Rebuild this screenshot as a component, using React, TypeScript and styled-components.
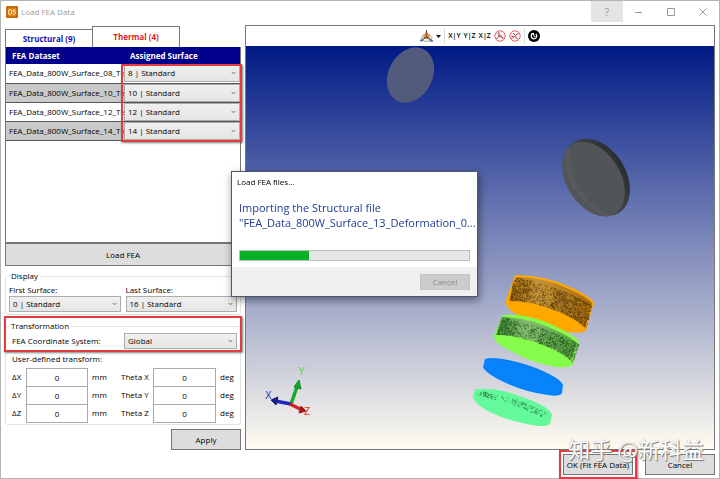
import React, { useState } from "react";
import styled, { createGlobalStyle, css } from "styled-components";

const GlobalStyle = createGlobalStyle`
  *, *::before, *::after { box-sizing: border-box; }
  body { margin: 0; background: #fff; }
  body, button, input, select {
    font-family: "Open Sans", "Noto Sans", "Noto Sans CJK SC", sans-serif;
    font-size: 8px;
    line-height: 12px;
    color: #000;
  }
`;

const Window = styled.div`
  min-height: 100vh;
  display: flex;
  flex-direction: column;
  border: 1px solid #b4b4b4;
  background: #fff;
`;

const TitleBar = styled.header`
  height: 21px;
  display: flex;
  align-items: stretch;
  justify-content: space-between;
`;

const TitleGroup = styled.div`
  display: flex;
  align-items: center;
  gap: 3px;
  padding-left: 5px;
`;

const Title = styled.h1`
  margin: 0;
  font-size: 8px;
  font-weight: 400;
  color: #999;
`;

const CaptionButtons = styled.div`
  display: flex;
`;

const CaptionButton = styled.button<{ $active?: boolean }>`
  width: 32px;
  padding: 0;
  border: 0;
  display: grid;
  place-items: center;
  color: #999;
  font-size: 10px;
  background: ${(p) => (p.$active ? "#e4e4e4" : "transparent")};
`;

const Body = styled.main`
  flex: 1;
  display: grid;
  grid-template-columns: 236px minmax(0, 1fr);
  gap: 4px;
  padding: 3px 4px 0 4px;
`;

const Sidebar = styled.section`
  display: flex;
  flex-direction: column;
`;

const Tabs = styled.div`
  display: flex;
  align-items: flex-end;
  height: 22px;
`;

const Tab = styled.button<{ $active?: boolean }>`
  width: 88px;
  height: ${(p) => (p.$active ? 21 : 18)}px;
  padding: 0;
  border: 1px solid #777;
  border-bottom: 0;
  background: #fff;
  font-weight: 700;
  color: ${(p) => (p.$active ? "#e01b24" : "#1414b4")};
  & + & { margin-left: -1px; }
`;

const TableArea = styled.div`
  position: relative;
  flex: 1;
  min-height: 190px;
  border: 1px solid #777;
  border-top: 0;
`;

const DataTable = styled.table`
  width: 100%;
  border-collapse: collapse;
  table-layout: fixed;
`;

const HeadCell = styled.th`
  height: 17px;
  padding: 0 7px 0 6px;
  background: #00008b;
  color: #fff;
  font-weight: 700;
  text-align: left;
  &:first-child { width: 118px; }
`;

const Row = styled.tr`
  border-bottom: 1px solid #555;
  &:nth-child(even) { background: #c9c9c9; }
`;

const Cell = styled.td`
  height: 19px;
  padding: 0;
`;

const FileName = styled.div`
  padding-left: 3px;
  white-space: nowrap;
`;

const SelectWrap = styled.div<{ $tall?: boolean }>`
  position: relative;
  height: ${(p) => (p.$tall ? 18 : 16)}px;
  svg {
    position: absolute;
    right: 4px;
    top: 50%;
    margin-top: -2px;
    pointer-events: none;
  }
`;

const Select = styled.select`
  appearance: none;
  width: 100%;
  height: 100%;
  padding: 0 14px 0 3px;
  border: 1px solid #acacac;
  border-radius: 0;
  background: linear-gradient(#f0f0f0, #e5e5e5);
`;

const Highlight = styled.div<{ $kind: "surfaces" | "group" | "button" }>`
  position: absolute;
  border: 2px solid #e33b40;
  box-shadow: 1px 1px 2px rgba(0, 0, 0, 0.5);
  pointer-events: none;
  ${(p) =>
    p.$kind === "surfaces" &&
    css`
      top: 17px;
      left: 115px;
      right: -2px;
      height: 78px;
    `}
  ${(p) =>
    p.$kind === "group" &&
    css`
      top: -4px;
      left: -1px;
      right: -1px;
      height: 36px;
    `}
  ${(p) =>
    p.$kind === "button" &&
    css`
      inset: -4px;
    `}
`;

const Button = styled.button<{ $width?: number; $height?: number }>`
  width: ${(p) => (p.$width ? `${p.$width}px` : "100%")};
  height: ${(p) => p.$height ?? 21}px;
  padding: 0;
  border: 1px solid #777;
  background: #ddd;
  white-space: nowrap;
  &:disabled {
    border-color: #c4c4c4;
    background: #ccc;
    color: #888;
  }
`;

const Group = styled.fieldset`
  min-width: 0;
  margin: 0;
  padding: 1px 3px 2px;
  border: 1px solid #e2e2e2;
  border-radius: 3px;
`;

const Legend = styled.legend`
  padding: 0 2px;
`;

const DisplayGroup = styled(Group)`
  margin: 4px 0 5px;
  padding-top: 2px;
`;

const TwoColumns = styled.div`
  display: grid;
  grid-template-columns: 1fr 1fr;
  gap: 5px;
`;

const Relative = styled.div`
  position: relative;
`;

const CoordinateRow = styled.div`
  display: grid;
  grid-template-columns: 112px 1fr;
  align-items: center;
  padding-left: 3px;
`;

const Caption = styled.div`
  padding: 4px 3px 3px;
`;

const TransformGrid = styled.div`
  display: grid;
  grid-template-columns: 14px 62px 1fr 32px 63px 21px;
  align-items: center;
  padding-left: 3px;
`;

const Unit = styled.span`
  padding-left: 4px;
`;

const NumberInput = styled.input`
  width: 100%;
  height: 19px;
  margin-bottom: -1px;
  padding: 0;
  border: 1px solid #aaa;
  text-align: center;
`;

const ApplyRow = styled.div`
  display: flex;
  justify-content: flex-end;
  padding-top: 4px;
`;

const Viewer = styled.section`
  display: flex;
  flex-direction: column;
  min-width: 0;
  border: 1px solid #777;
`;

const Toolbar = styled.div`
  height: 20px;
  flex: none;
  display: flex;
  align-items: center;
  justify-content: center;
  gap: 3px;
`;

const ToolButton = styled.button`
  display: flex;
  align-items: center;
  gap: 3px;
  padding: 0;
  border: 0;
  background: none;
  font-size: 7px;
  font-weight: 600;
  white-space: pre;
`;

const Separator = styled.span`
  width: 1px;
  height: 16px;
  background: #ddd;
`;

const Viewport = styled.div`
  flex: 1;
  position: relative;
  min-height: 300px;
  background: linear-gradient(#001a85, #fffcf0);
  & > svg {
    position: absolute;
    width: 100%;
    height: 100%;
  }
`;

const Footer = styled.footer`
  position: relative;
  display: flex;
  justify-content: flex-end;
  gap: 12px;
  padding: 4px 4px 3px;
`;

const Watermark = styled.div`
  position: absolute;
  right: 15px;
  bottom: 20px;
  font-family: "Noto Sans CJK SC", sans-serif;
  font-size: 22px;
  line-height: 20px;
  white-space: nowrap;
  color: #fff;
  text-shadow: 1px 1px 1px #777, 0 0 1px #999;
  pointer-events: none;
`;

const DialogLayer = styled.div`
  position: fixed;
  inset: 0;
  display: grid;
  place-items: center;
  padding: 0 11px 12px 0;
  pointer-events: none;
`;

const Dialog = styled.div`
  width: 247px;
  border: 1px solid #4a5674;
  background: #fff;
  box-shadow: 1px 3px 8px rgba(0, 0, 0, 0.45);
  pointer-events: auto;
`;

const DialogContent = styled.div`
  padding: 4px 7px 6px;
`;

const DialogTitle = styled.h2`
  margin: 0 0 12px -2px;
  font-size: 8px;
  font-weight: 400;
`;

const Message = styled.p`
  margin: 0 0 20px;
  font-size: 11px;
  line-height: 15px;
  color: #1f3c99;
`;

const MessageLine = styled.span`
  display: block;
  white-space: nowrap;
`;

const Progress = styled.progress`
  appearance: none;
  display: block;
  width: 100%;
  height: 11px;
  border: 1px solid #bcbcbc;
  background: #e6e6e6;
  &::-webkit-progress-bar { background: #e6e6e6; }
  &::-webkit-progress-value { background: #06b025; }
`;

const DialogFooter = styled.div`
  display: flex;
  justify-content: flex-end;
  padding: 7px 7px 6px;
  background: #f0f0f0;
`;

const Chevron = () => (
  <svg width="5" height="4" viewBox="0 0 6 4" aria-hidden="true">
    <path d="M.8.7 3 2.9 5.2.7" fill="none" stroke="#555" />
  </svg>
);

function Dropdown({ label, value, id, tall }: { label?: string; value: string; id?: string; tall?: boolean }) {
  return (
    <SelectWrap $tall={tall}>
      <Select id={id} aria-label={label} defaultValue={value}>
        <option>{value}</option>
      </Select>
      <Chevron />
    </SelectWrap>
  );
}

const AppIcon = () => (
  <svg width="12" height="12" viewBox="0 0 12 12" aria-hidden="true">
    <rect width="12" height="12" rx="1" fill="#ee7d0c" />
    <rect x="1" y="1" width="10" height="10" fill="none" stroke="#8a4a12" strokeWidth=".8" />
    <ellipse cx="4" cy="6" rx="1.7" ry="2.5" fill="none" stroke="#fff2d8" />
    <path d="M9.6 4Q6.8 3 7 5q2.8.5 2.5 2.300Q9 9 6.700 8" fill="none" stroke="#fff2d8" />
  </svg>
);

const OrientationIcon = () => (
  <svg width="13" height="13" viewBox="0 0 13 13" aria-hidden="true">
    <path d="M6.500 1.500 10 5.500 9 9 4 9 3 6Z" fill="#e79a50" />
    <path d="M6.500 0v7L1 10.500M6.500 7l5.500 3.500" fill="none" stroke="#5b4638" strokeWidth="1.100" />
    <path d="M3.500 4.500 1 8.500l4 3 6-1 1-3-2.500-3" fill="none" stroke="#7aa06a" strokeWidth=".8" />
    <circle cx="6.500" cy="4.500" r="1.500" fill="#d9603b" />
    <path d="M0 10.500h3M10 11h3" stroke="#4a69b8" strokeWidth="1.400" />
  </svg>
);

const CaretIcon = () => (
  <svg width="5" height="3" viewBox="0 0 5 3" aria-hidden="true">
    <path d="M0 0h5L2.500 3Z" fill="#111" />
  </svg>
);

const AxisIcon = ({ flipped }: { flipped?: boolean }) => (
  <svg width="12" height="12" viewBox="0 0 12 12" aria-hidden="true">
    <circle cx="6" cy="6" r="5.200" fill="#fff5f5" stroke="#e65f64" />
    <path
      d={flipped ? "M2.500 6.500h3l3-3M5.500 6.500 9 9M6 5 4 3" : "M5 2v4L2.500 9M5 6l4.500 2M5 6l3 0"}
      fill="none"
      stroke="#8f4a4e"
    />
    <path d={flipped ? "M2 9 10 3" : "M2.300 2.300 9.700 9.700"} stroke="#e65f64" strokeWidth=".9" />
  </svg>
);

const ResetIcon = () => (
  <svg width="12" height="12" viewBox="0 0 12 12" aria-hidden="true">
    <circle cx="6" cy="6" r="6" fill="#000" />
    <path d="M7.800 3.900A2.800 2.800 0 1 1 4 4" fill="none" stroke="#fff" strokeWidth="1.300" />
    <path d="M3 3.300 6 2.700v3Z" fill="#fff" />
    <path d="M6 4.500v2h1.500" fill="none" stroke="#fff" strokeWidth=".8" />
  </svg>
);

/* Deterministic mesh specks across the side wall of a tilted cylinder. */
function meshSpecks(x: number, y: number, width: number, slope: number, height: number, count: number, seed: number) {
  let state = seed;
  const next = () => {
    state = (state * 16807) % 2147483647;
    return state / 2147483647;
  };
  let path = "";
  for (let i = 0; i < count; i += 1) {
    const t = next();
    if (t > 0.22 && t < 0.52 && next() < 0.6) continue;
    const v = next() * height;
    const px = x + t * width - (v / height) * 6;
    const py = y + t * slope - Math.sin(t * Math.PI) * 3 + v;
    path += `M${px.toFixed(1)} ${py.toFixed(1)}l${(next() * 1.6 - 0.8).toFixed(1)} ${(next() * 1.4).toFixed(1)}`;
  }
  return path;
}

const orangeMesh = meshSpecks(515, 277, 77, 27, 25, 2100, 91);
const greenMesh = meshSpecks(502, 317, 77, 27, 18, 1500, 57);
const mintMesh = meshSpecks(482, 391, 66, 22, 4, 240, 33);

const Scene = () => (
  <svg viewBox="246 46 468 403" preserveAspectRatio="xMidYMid slice" role="img" aria-label="Lens assembly">
    <defs>
      <linearGradient id="orangeWall" x1="0" x2="1">
        <stop offset="0" stopColor="#bd7a08" />
        <stop offset=".35" stopColor="#c39339" />
        <stop offset="1" stopColor="#a96d09" />
      </linearGradient>
      <linearGradient id="greenWall" x1="0" x2="1">
        <stop offset="0" stopColor="#4a9a34" />
        <stop offset=".38" stopColor="#86bd72" />
        <stop offset="1" stopColor="#55a638" />
      </linearGradient>
      <linearGradient id="diskEdge" x1="0" x2="1">
        <stop offset="0" stopColor="#606366" />
        <stop offset=".45" stopColor="#44484a" />
        <stop offset="1" stopColor="#292e31" />
      </linearGradient>
    </defs>
    <ellipse cx="410.500" cy="75" rx="22" ry="29" transform="rotate(27 410.500 75)" fill="#535b7d" />
    <ellipse cx="596.500" cy="177.500" rx="29.500" ry="42" transform="rotate(-32 596.500 177.500)" fill="url(#diskEdge)" />
    <ellipse cx="593.500" cy="179" rx="27" ry="40.500" transform="rotate(-32 593.500 179)" fill="#525558" />
    <path d="M565 151q-2 31 21 52 15 16 32 13-20-1-36-24-12-17-12-44Z" fill="#66696b" opacity=".25" />

    <path d="M515 275q29 0 55 12 16 7 24 15l-8 28q-2 4-19 2-29-5-49-17-13-9-12-15Z" fill="#ffa800" />
    <path d="M516 277q28 0 53 12 18 8 23 14l-7 25q-18-14-39-20-19-7-37-7Z" fill="url(#orangeWall)" />
    <path d={orangeMesh} stroke="#55380a" strokeWidth=".7" fill="none" />
    <path d="M506 301q-1 8 15 16 30 15 59 15 6 0 6-3-10-11-35-20-25-9-45-8Z" fill="#ffa800" />

    <path d="M503 315q26-2 54 12 16 8 22 14l-6 23q-2 4-17 3-28-5-48-18-13-8-14-14Z" fill="#85fc4c" />
    <path d="M503 317q24 0 50 12 18 8 24 14l-6 18q-17-14-39-20-20-6-35-6Z" fill="url(#greenWall)" />
    <path d={greenMesh} stroke="#23541e" strokeWidth=".7" fill="none" />
    <path d="M494 335q-1 8 15 15 25 14 52 17 11 1 12-4-10-11-36-20-26-9-43-8Z" fill="#85fc4c" />

    <path d="M485 359q5-2 18 0 23 4 40 12 18 8 20 14l-1 8q-2 4-14 2-22-3-42-12-20-9-23-16Z" fill="#0784fb" />
    <path d="M486 360q8-2 25 2 28 7 51 22" fill="none" stroke="#086ecb" strokeDasharray="1 2" />
    <path d="M475 389q24-2 50 9 25 9 27 17l-2 9q-5 4-23 0-22-4-39-13-14-8-15-14Z" fill="#64f99a" />
    <path d={mintMesh} stroke="#278048" strokeWidth=".8" fill="none" />

    <path d="m291 404 7-20" stroke="#17a92b" strokeWidth="3.500" />
    <path d="m294 387 5-7 2 9Z" fill="#16aa2c" stroke="#16852a" />
    <path d="m291 404-16-3" stroke="#2028b4" strokeWidth="3.500" />
    <path d="m278 397-7 3 5 5Z" fill="#171d86" stroke="#171d86" />
    <path d="m290 404 10 5" stroke="#cf2222" strokeWidth="3.500" />
    <path d="m301 406 5 5-7 2Z" fill="#a91818" stroke="#a91818" />
    <g fontFamily="Liberation Sans, sans-serif" fontSize="10">
      <text x="265" y="399" fill="#3034b3">X</text>
      <text x="298" y="375" fill="#4bdc50">Y</text>
      <text x="304" y="415" fill="#d33">Z</text>
    </g>
  </svg>
);

const surfaces = [
  { file: "FEA_Data_800W_Surface_08_Te", surface: "8 | Standard" },
  { file: "FEA_Data_800W_Surface_10_Te", surface: "10 | Standard" },
  { file: "FEA_Data_800W_Surface_12_Te", surface: "12 | Standard" },
  { file: "FEA_Data_800W_Surface_14_Te", surface: "14 | Standard" },
];

export default function App() {
  const [tab, setTab] = useState("thermal");
  return (
    <>
      <GlobalStyle />
      <Window>
        <TitleBar>
          <TitleGroup>
            <AppIcon />
            <Title>Load FEA Data</Title>
          </TitleGroup>
          <CaptionButtons>
            <CaptionButton $active aria-label="Help">?</CaptionButton>
            <CaptionButton aria-label="Minimize">
              <svg width="8" height="8"><path d="M0 4.500h7" stroke="#999" /></svg>
            </CaptionButton>
            <CaptionButton aria-label="Maximize">
              <svg width="8" height="8"><path d="M.5.5h7v7h-7Z" stroke="#999" fill="none" /></svg>
            </CaptionButton>
            <CaptionButton aria-label="Close">
              <svg width="8" height="8"><path d="m.5.5 7 7m0-7-7 7" stroke="#999" /></svg>
            </CaptionButton>
          </CaptionButtons>
        </TitleBar>
        <Body>
          <Sidebar>
            <Tabs role="tablist">
              <Tab role="tab" aria-selected={tab === "structural"} $active={tab === "structural"} onClick={() => setTab("structural")}>
                Structural (9)
              </Tab>
              <Tab role="tab" aria-selected={tab === "thermal"} $active={tab === "thermal"} onClick={() => setTab("thermal")}>
                Thermal (4)
              </Tab>
            </Tabs>
            <TableArea>
              <DataTable>
                <thead>
                  <tr>
                    <HeadCell>FEA Dataset</HeadCell>
                    <HeadCell>Assigned Surface</HeadCell>
                  </tr>
                </thead>
                <tbody>
                  {surfaces.map((s) => (
                    <Row key={s.file}>
                      <Cell><FileName>{s.file}</FileName></Cell>
                      <Cell><Dropdown tall label={`Surface for ${s.file}`} value={s.surface} /></Cell>
                    </Row>
                  ))}
                </tbody>
              </DataTable>
              <Highlight $kind="surfaces" />
            </TableArea>
            <Button $height={23}>Load FEA</Button>
            <DisplayGroup>
              <Legend>Display</Legend>
              <TwoColumns>
                <div>
                  <label htmlFor="first">First Surface:</label>
                  <Dropdown id="first" value="0 | Standard" />
                </div>
                <div>
                  <label htmlFor="last">Last Surface:</label>
                  <Dropdown id="last" value="16 | Standard" />
                </div>
              </TwoColumns>
            </DisplayGroup>
            <Relative>
              <Group>
                <Legend>Transformation</Legend>
                <CoordinateRow>
                  <label htmlFor="system">FEA Coordinate System:</label>
                  <Dropdown id="system" value="Global" />
                </CoordinateRow>
                <Caption>User-defined transform:</Caption>
                <TransformGrid>
                  {["X", "Y", "Z"].map((axis) => (
                    <React.Fragment key={axis}>
                      <label htmlFor={`d${axis}`}>Δ{axis}</label>
                      <NumberInput id={`d${axis}`} defaultValue="0" />
                      <Unit>mm</Unit>
                      <label htmlFor={`t${axis}`}>Theta {axis}</label>
                      <NumberInput id={`t${axis}`} defaultValue="0" />
                      <Unit>deg</Unit>
                    </React.Fragment>
                  ))}
                </TransformGrid>
              </Group>
              <Highlight $kind="group" />
            </Relative>
            <ApplyRow>
              <Button $width={70}>Apply</Button>
            </ApplyRow>
          </Sidebar>
          <Viewer>
            <Toolbar>
              <ToolButton aria-label="View orientation"><OrientationIcon /><CaretIcon /></ToolButton>
              <Separator />
              <ToolButton>X|Y</ToolButton>
              <ToolButton>Y|Z</ToolButton>
              <ToolButton>X|Z</ToolButton>
              <ToolButton aria-label="Rotate about axis"><AxisIcon /></ToolButton>
              <ToolButton aria-label="Lock rotation"><AxisIcon flipped /></ToolButton>
              <Separator />
              <ToolButton aria-label="Reset view"><ResetIcon /></ToolButton>
            </Toolbar>
            <Viewport><Scene /></Viewport>
          </Viewer>
        </Body>
        <Footer>
          <Relative>
            <Button $width={70}>OK (Fit FEA Data)</Button>
            <Highlight $kind="button" />
          </Relative>
          <Button $width={70}>Cancel</Button>
          <Watermark>知乎 @新科益</Watermark>
        </Footer>
      </Window>
      <DialogLayer>
        <Dialog role="dialog" aria-labelledby="dialog-title">
          <DialogContent>
            <DialogTitle id="dialog-title">Load FEA files...</DialogTitle>
            <Message>
              <MessageLine>Importing the Structural file</MessageLine>
              <MessageLine>"FEA_Data_800W_Surface_13_Deformation_0...</MessageLine>
            </Message>
            <Progress value={30} max={100} aria-label="Import progress" />
          </DialogContent>
          <DialogFooter>
            <Button $width={50} $height={16} disabled>Cancel</Button>
          </DialogFooter>
        </Dialog>
      </DialogLayer>
    </>
  );
}
